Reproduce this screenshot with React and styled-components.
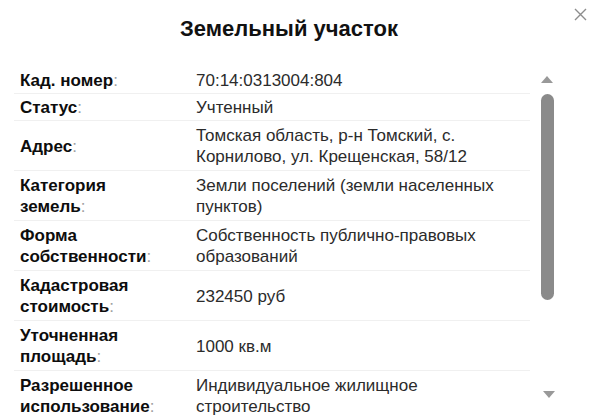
import React from 'react';
import styled, { createGlobalStyle } from 'styled-components';

const Global = createGlobalStyle`
  html, body { margin: 0; padding: 0; background: #fff; }
  body { font-family: "Liberation Sans", Arial, sans-serif; }
`;

const Page = styled.div`
  position: relative;
  width: 596px;
  height: 416px;
  overflow: hidden;
  background: #fff;
`;

const Close = styled.button`
  position: absolute;
  top: 5px;
  right: 7px;
  width: 18px;
  height: 18px;
  padding: 0;
  border: 0;
  background: none;
  display: flex;
  align-items: center;
  justify-content: center;
`;

const Title = styled.h1`
  margin: 0;
  padding: 16px 18px 0 0;
  height: 50px;
  box-sizing: border-box;
  text-align: center;
  font-size: 22px;
  line-height: 26px;
  font-weight: bold;
  color: #111;
`;

const Body = styled.div`
  display: flex;
  padding: 17px 0 0 14px;
`;

const List = styled.div`
  width: 516px;
`;

const Row = styled.div`
  display: grid;
  grid-template-columns: 176px 1fr;
  align-items: center;
  padding: ${p => (p.$multi ? '4px 0 3px 6px' : '3px 0 2px 6px')};
  border-bottom: 1px solid #f0f0f0;
  font-size: 17px;
  line-height: 21px;
`;

const Label = styled.div`
  max-width: 140px;
  font-weight: bold;
  color: #0d0d0d;
`;

const Colon = styled.span`
  font-weight: normal;
  color: #a0a0a0;
`;

const Value = styled.div`
  color: #2b2b2b;
`;

const Scroll = styled.div`
  width: 26px;
  margin-left: 4px;
  display: flex;
  flex-direction: column;
  align-items: center;
  padding-top: 9px;
`;

const Arrow = styled.div`
  width: 0;
  height: 0;
  border-left: 6px solid transparent;
  border-right: 6px solid transparent;
  ${p => (p.$down ? 'border-top: 7px solid #999;' : 'border-bottom: 7px solid #999;')}
  margin-left: ${p => (p.$down ? '3px' : '0')};
`;

const Thumb = styled.div`
  width: 13px;
  height: 206px;
  margin: 11px 0 91px;
  border-radius: 7px;
  background: #8a8a8a;
`;

const rows = [
  { l: 'Кад. номер', v: '70:14:0313004:804' },
  { l: 'Статус', v: 'Учтенный' },
  { l: 'Адрес', v: 'Томская область, р-н Томский, с. Корнилово, ул. Крещенская, 58/12', m: true },
  { l: 'Категория земель', v: 'Земли поселений (земли населенных пунктов)', m: true },
  { l: 'Форма собственности', v: 'Собственность публично-правовых образований', m: true },
  { l: 'Кадастровая стоимость', v: '232450 руб', m: true },
  { l: 'Уточненная площадь', v: '1000 кв.м', m: true },
  { l: 'Разрешенное использование', v: 'Индивидуальное жилищное строительство', m: true },
];

export default function App() {
  return (
    <Page>
      <Global />
      <Close aria-label="Закрыть">
        <svg width="13" height="13" viewBox="0 0 13 13">
          <path d="M1 1L12 12M12 1L1 12" stroke="#8d8d8d" strokeWidth="1.4" />
        </svg>
      </Close>
      <Title>Земельный участок</Title>
      <Body>
        <List>
          {rows.map(r => (
            <Row key={r.l} $multi={r.m}>
              <Label>
                {r.l}
                <Colon>:</Colon>
              </Label>
              <Value>{r.v}</Value>
            </Row>
          ))}
        </List>
        <Scroll>
          <Arrow />
          <Thumb />
          <Arrow $down />
        </Scroll>
      </Body>
    </Page>
  );
}
